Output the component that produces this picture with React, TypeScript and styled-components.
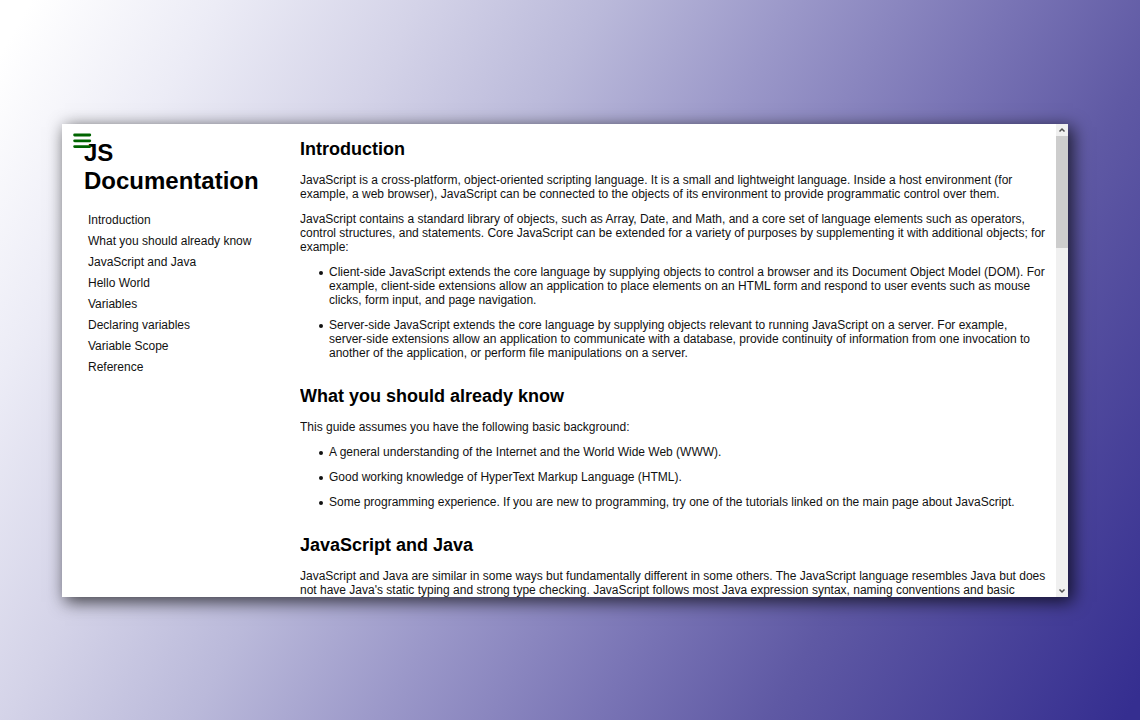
import React from "react";
import styled, { createGlobalStyle } from "styled-components";

const GlobalStyle = createGlobalStyle`
  * { box-sizing: border-box; }
  body {
    margin: 0;
    font-family: "Liberation Sans", Arial, sans-serif;
    font-size: 12px;
    line-height: 14px;
    color: #111;
  }
`;

const Page = styled.div`
  height: 100vh;
  display: flex;
  padding: 124px 72px 123px 62px;
  background: linear-gradient(
    120deg,
    #ffffff 2%,
    #ececf6 14%,
    #d4d3e8 27%,
    #bab9da 39%,
    #9b98c9 51%,
    #7974b5 65%,
    #5f59a4 76%,
    #352e90 99%
  );
`;

const Window = styled.div`
  flex: 1;
  min-width: 0;
  display: grid;
  grid-template-columns: 238px minmax(0, 1fr) 12px;
  grid-template-rows: minmax(0, 1fr);
  background: #fff;
  box-shadow: 4px 4px 16px 1px rgba(0, 0, 0, 0.7);
`;

const Sidebar = styled.nav`
  position: relative;
  padding: 15px 24px 0 22px;
`;

const MenuButton = styled.button`
  position: absolute;
  top: 9px;
  left: 11px;
  padding: 0;
  border: 0;
  background: none;
  line-height: 0;
  cursor: pointer;
`;

const Title = styled.h1`
  margin: 0;
  font-size: 24px;
  line-height: 28px;
  color: #000;
`;

const NavList = styled.ul`
  list-style: none;
  margin: 15px 0 0;
  padding: 0 0 0 4px;
`;

const NavItem = styled.li`
  line-height: 21px;
`;

const NavLink = styled.a`
  color: inherit;
  text-decoration: none;
`;

const Content = styled.main`
  padding: 15px 8px 0 0;
  overflow: hidden;
`;

const Section = styled.section`
  margin-bottom: 26px;
`;

const Heading = styled.h2`
  margin: 0 0 13px;
  font-size: 18px;
  line-height: 21px;
  color: #000;
`;

const Paragraph = styled.p`
  margin: 0 0 11px;
`;

const Bullets = styled.ul`
  margin: 0;
  padding-left: 19px;
  list-style: none;
`;

const Bullet = styled.li`
  display: grid;
  grid-template-columns: 10px minmax(0, 1fr);
  margin-bottom: 11px;

  &::before {
    content: "";
    width: 4px;
    height: 4px;
    margin-top: 6px;
    border-radius: 50%;
    background: #111;
  }
`;

const Scrollbar = styled.div`
  display: flex;
  flex-direction: column;
  background: #f0f0f0;
`;

const ScrollButton = styled.button`
  height: 12px;
  padding: 0;
  border: 0;
  background: #f0f0f0;
  display: grid;
  place-items: center;
`;

const Track = styled.div`
  flex: 1;
`;

const Thumb = styled.div`
  height: 25%;
  background: #cdcdcd;
`;

const links = [
  ["Introduction", "introduction"],
  ["What you should already know", "background"],
  ["JavaScript and Java", "java"],
  ["Hello World", "hello"],
  ["Variables", "variables"],
  ["Declaring variables", "declaring"],
  ["Variable Scope", "scope"],
  ["Reference", "reference"],
];

function Chevron({ d }: { d: string }) {
  return (
    <svg width="8" height="8" viewBox="0 0 8 8" fill="none" stroke="#505050" strokeWidth="1.5" aria-hidden="true">
      <path d={d} />
    </svg>
  );
}

export default function App() {
  return (
    <>
      <GlobalStyle />
      <Page>
        <Window>
          <Sidebar>
            <Title>JS Documentation</Title>
            <MenuButton aria-label="Toggle menu">
              <svg width="19" height="16" viewBox="0 0 19 16" stroke="#006400" strokeWidth="2.8" strokeLinecap="round">
                <path d="M1.6 2H16.8M1.6 7.8H16.8M1.6 13.6H16.8" />
              </svg>
            </MenuButton>
            <NavList>
              {links.map(([label, id]) => (
                <NavItem key={id}>
                  <NavLink href={`#${id}`}>{label}</NavLink>
                </NavItem>
              ))}
            </NavList>
          </Sidebar>
          <Content>
            <Section id="introduction">
              <Heading>Introduction</Heading>
              <Paragraph>
                JavaScript is a cross-platform, object-oriented scripting language. It is a small and lightweight
                language. Inside a host environment (for example, a web browser), JavaScript can be connected to the
                objects of its environment to provide programmatic control over them.
              </Paragraph>
              <Paragraph>
                JavaScript contains a standard library of objects, such as Array, Date, and Math, and a core set of
                language elements such as operators, control structures, and statements. Core JavaScript can be
                extended for a variety of purposes by supplementing it with additional objects; for example:
              </Paragraph>
              <Bullets>
                <Bullet>
                  Client-side JavaScript extends the core language by supplying objects to control a browser and its
                  Document Object Model (DOM). For example, client-side extensions allow an application to place
                  elements on an HTML form and respond to user events such as mouse clicks, form input, and page
                  navigation.
                </Bullet>
                <Bullet>
                  Server-side JavaScript extends the core language by supplying objects relevant to running JavaScript
                  on a server. For example, server-side extensions allow an application to communicate with a
                  database, provide continuity of information from one invocation to another of the application, or
                  perform file manipulations on a server.
                </Bullet>
              </Bullets>
            </Section>
            <Section id="background">
              <Heading>What you should already know</Heading>
              <Paragraph>This guide assumes you have the following basic background:</Paragraph>
              <Bullets>
                <Bullet>A general understanding of the Internet and the World Wide Web (WWW).</Bullet>
                <Bullet>Good working knowledge of HyperText Markup Language (HTML).</Bullet>
                <Bullet>
                  Some programming experience. If you are new to programming, try one of the tutorials linked on the
                  main page about JavaScript.
                </Bullet>
              </Bullets>
            </Section>
            <Section id="java">
              <Heading>JavaScript and Java</Heading>
              <Paragraph>
                JavaScript and Java are similar in some ways but fundamentally different in some others. The
                JavaScript language resembles Java but does not have Java's static typing and strong type checking.
                JavaScript follows most Java expression syntax, naming conventions and basic
              </Paragraph>
            </Section>
          </Content>
          <Scrollbar>
            <ScrollButton aria-label="Scroll up">
              <Chevron d="M1.5 5.5L4 3L6.5 5.5" />
            </ScrollButton>
            <Track>
              <Thumb />
            </Track>
            <ScrollButton aria-label="Scroll down">
              <Chevron d="M1.5 2.5L4 5L6.5 2.5" />
            </ScrollButton>
          </Scrollbar>
        </Window>
      </Page>
    </>
  );
}
